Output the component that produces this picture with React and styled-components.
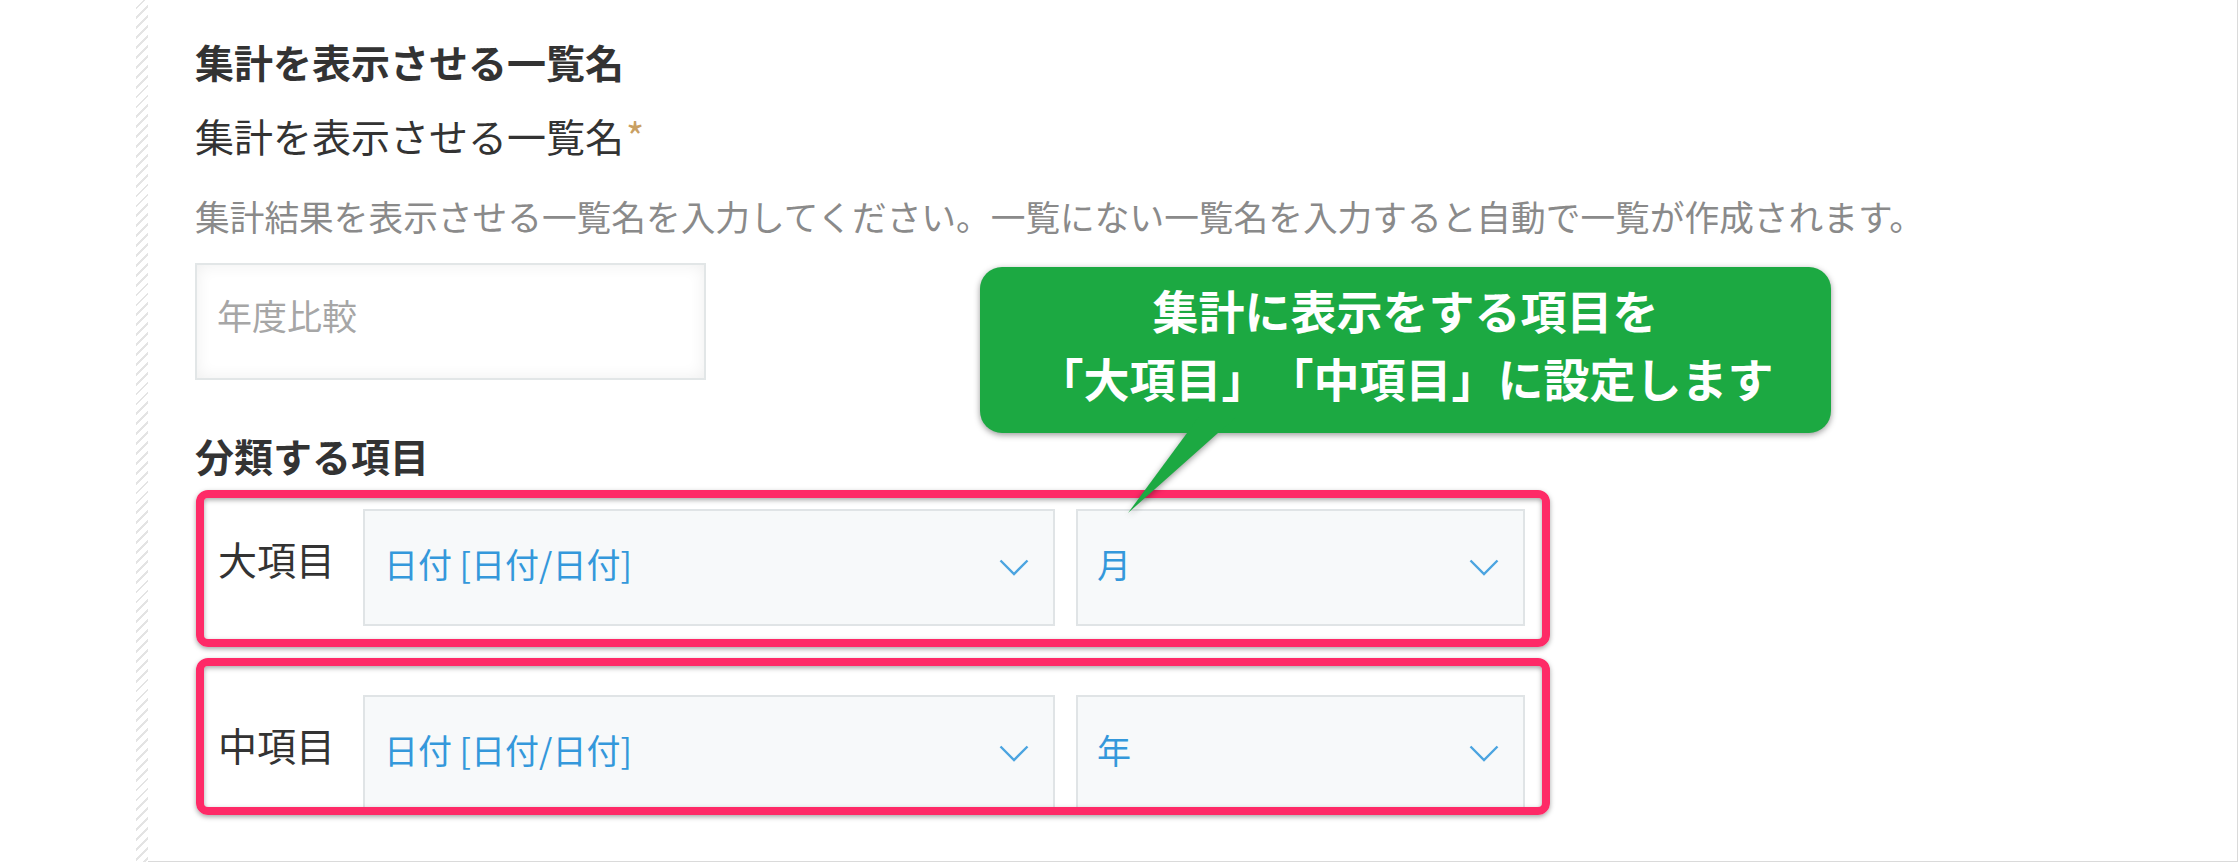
import React from "react";
import styled, { createGlobalStyle } from "styled-components";

const GlobalStyle = createGlobalStyle`
  html, body {
    margin: 0;
    padding: 0;
    background: #fff;
  }
  body {
    font-family: "Noto Sans CJK JP", "Noto Sans", sans-serif;
    color: #333;
    text-spacing-trim: space-all;
  }
  * {
    box-sizing: border-box;
  }
`;

const Page = styled.div`
  width: 2240px;
  height: 862px;
  display: flex;
  overflow: hidden;
  background: #fff;
`;

const Gutter = styled.div`
  width: 136px;
  flex: none;
`;

const Hatch = styled.div`
  width: 12px;
  flex: none;
  background: repeating-linear-gradient(135deg, transparent 0 5px, #e4e4e4 5px 7px);
`;

const Main = styled.main`
  position: relative;
  width: 2090px;
  height: 862px;
  flex: none;
  border-right: 1px solid #dadada;
  border-bottom: 1px solid #dadada;
  padding: 35px 0 0 47px;
  display: flex;
  flex-direction: column;
  align-items: flex-start;
`;

const Title = styled.h2`
  margin: ${(p) => p.$gap || 0}px 0 0;
  font-size: 39px;
  font-weight: 700;
  line-height: 52px;
  color: #333;
`;

const FieldLabel = styled.div`
  margin-top: 22px;
  font-size: 39px;
  line-height: 52px;
  color: #333;
`;

const Required = styled.span`
  color: #c9a063;
  margin-left: 2px;
`;

const Hint = styled.p`
  margin: 29px 0 0;
  font-size: 34.7px;
  line-height: 52px;
  color: #8a8a8a;
  white-space: nowrap;
`;

const TextInput = styled.input`
  margin-top: 21px;
  width: 511px;
  height: 117px;
  border: 2px solid #e2e6e7;
  background: #fff;
  box-shadow: inset 0 0 16px rgba(0, 0, 0, 0.07);
  padding: 0 20px 14px;
  font-family: inherit;
  font-size: 35px;
  color: #333;
  outline: none;
  &::placeholder {
    color: #a6a6a6;
  }
`;

const Rows = styled.div`
  margin-top: 28px;
  display: flex;
  flex-direction: column;
  gap: 69px;
`;

const Row = styled.div`
  position: relative;
  display: flex;
  align-items: center;
`;

const RowLabel = styled.div`
  width: 168px;
  padding: 0 0 20px 23px;
  font-size: 39px;
  line-height: 52px;
  color: #333;
`;

const Select = styled.div`
  width: ${(p) => p.$w}px;
  height: 117px;
  display: flex;
  align-items: center;
  justify-content: space-between;
  padding: 0 24px 0 19px;
  background: #f7f9fa;
  border: 2px solid #e0e4e6;
  color: #3498db;
  font-size: 34px;
  & + & {
    margin-left: 21px;
  }
`;

const SelectText = styled.span`
  padding-bottom: 8px;
`;

const Highlight = styled.div`
  position: absolute;
  left: 1px;
  width: 1354px;
  top: ${(p) => p.$top}px;
  bottom: ${(p) => p.$bottom}px;
  border: 8px solid #fe2a67;
  border-radius: 12px;
  pointer-events: none;
  box-shadow: 0 2px 5px rgba(0, 0, 0, 0.35), inset 0 2px 5px rgba(0, 0, 0, 0.35);
`;

const Callout = styled.div`
  position: absolute;
  left: 832px;
  top: 267px;
  width: 851px;
  height: 166px;
  filter: drop-shadow(0 2px 3px rgba(0, 0, 0, 0.4));
`;

const Bubble = styled.div`
  position: relative;
  height: 100%;
  padding-top: 8px;
  border-radius: 22px;
  background: #1ca942;
  color: #fff;
  font-size: 46px;
  font-weight: 700;
  line-height: 68px;
  text-align: center;
  white-space: nowrap;
  &::after {
    content: "";
    position: absolute;
    left: 140px;
    top: 150px;
    width: 120px;
    height: 96px;
    background: #1ca942;
    clip-path: polygon(78.8px 0, 116px 0, 8px 96px);
  }
`;

const rows = [
  { label: "大項目", field: "日付 [日付/日付]", unit: "月", top: -19, bottom: -21 },
  { label: "中項目", field: "日付 [日付/日付]", unit: "年", top: -37, bottom: -3 },
];

function Chevron() {
  return (
    <svg width="30" height="17" viewBox="0 0 30 17">
      <polyline points="1.5,1.5 15,15 28.5,1.5" fill="none" stroke="#4ba4e0" strokeWidth="2.4" />
    </svg>
  );
}

export default function App() {
  return (
    <>
      <GlobalStyle />
      <Page>
        <Gutter />
        <Hatch />
        <Main>
          <Title>集計を表示させる一覧名</Title>
          <FieldLabel>
            集計を表示させる一覧名<Required>*</Required>
          </FieldLabel>
          <Hint>
            集計結果を表示させる一覧名を入力してください。一覧にない一覧名を入力すると自動で一覧が作成されます。
          </Hint>
          <TextInput placeholder="年度比較" readOnly />

          <Title $gap={49}>分類する項目</Title>
          <Rows>
            {rows.map((r) => (
              <Row key={r.label}>
                <RowLabel>{r.label}</RowLabel>
                <Select $w={692}>
                  <SelectText>{r.field}</SelectText>
                  <Chevron />
                </Select>
                <Select $w={449}>
                  <SelectText>{r.unit}</SelectText>
                  <Chevron />
                </Select>
                <Highlight $top={r.top} $bottom={r.bottom} />
              </Row>
            ))}
          </Rows>

          <Callout>
            <Bubble>
              集計に表示をする項目を
              <br />
              「大項目」「中項目」に設定します
            </Bubble>
          </Callout>
        </Main>
      </Page>
    </>
  );
}
